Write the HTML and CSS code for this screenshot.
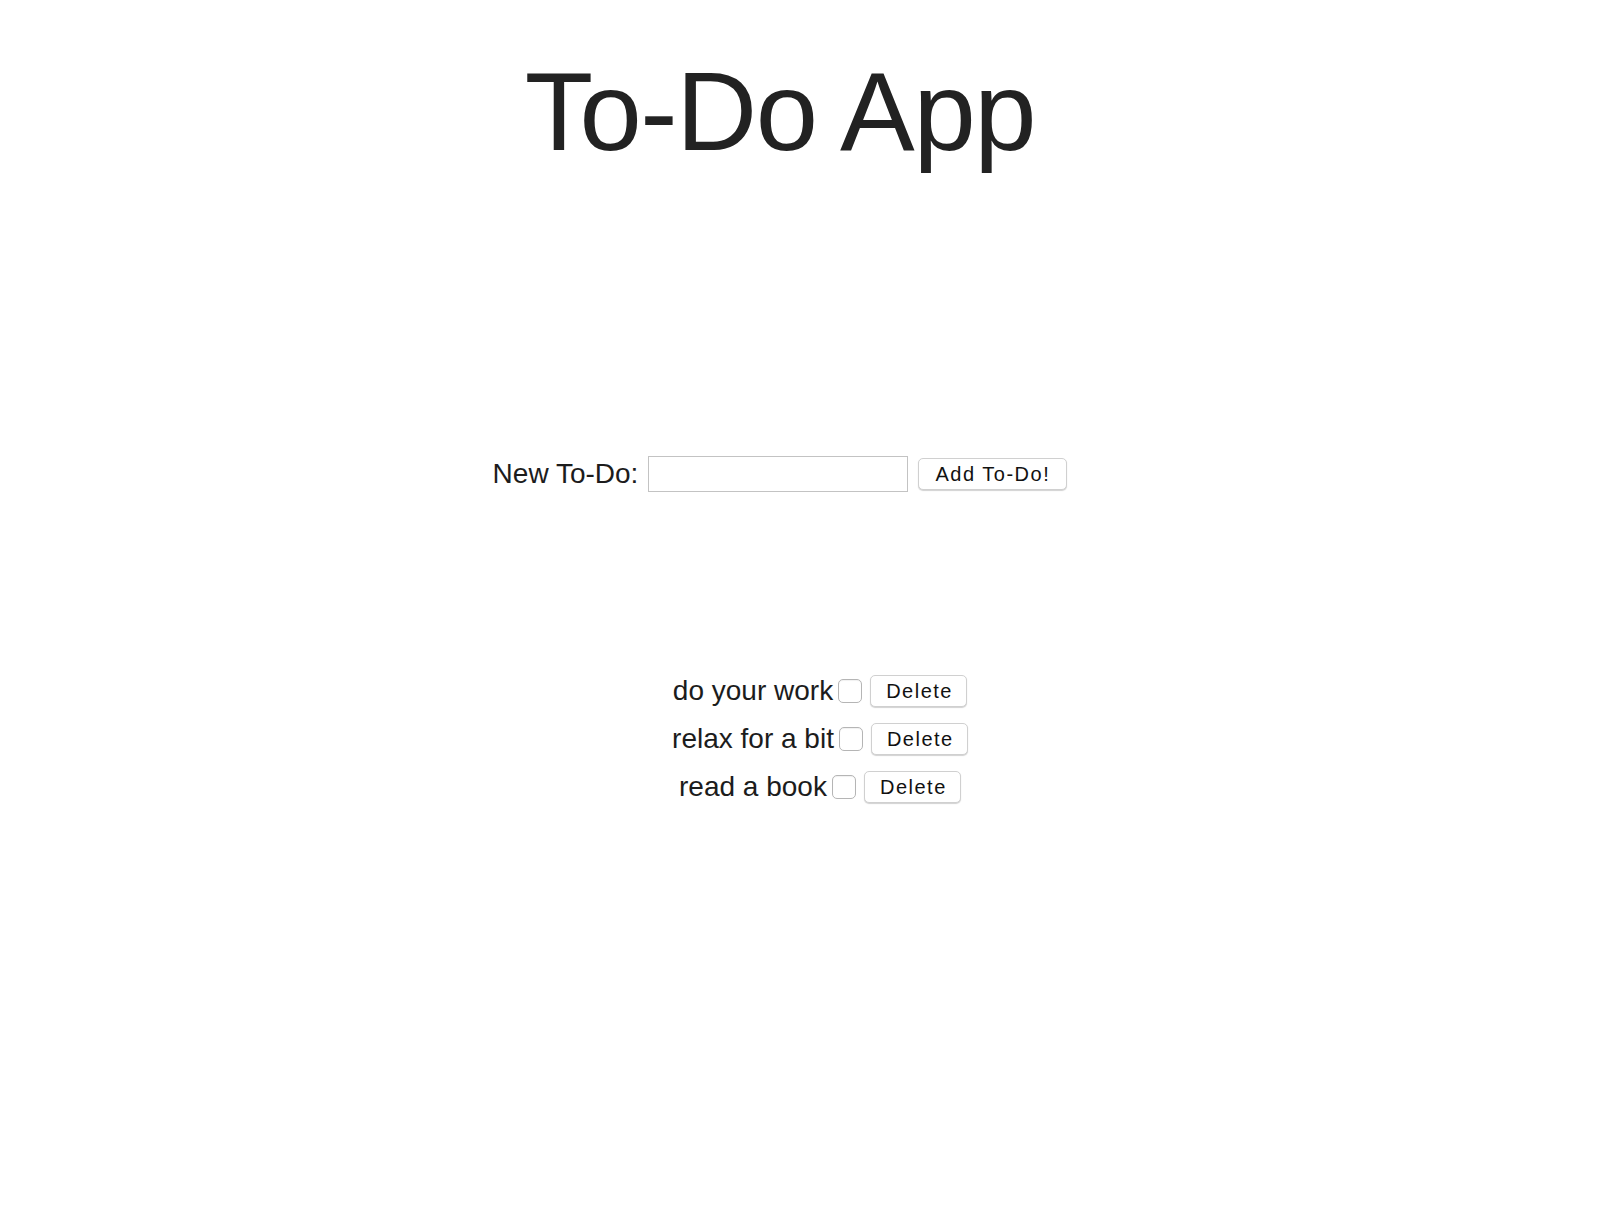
FILE: index.html
```html
<!DOCTYPE html>
<html>
<head>
<meta charset="utf-8">
<title>To-Do App</title>
<link rel="stylesheet" href="styles.css">
</head>
<body>
<div class="app">
  <header class="top">
    <h1 class="title">To-Do App</h1>
    <form class="new-form" onsubmit="return false;">
      <label class="new-label" for="newtodo">New To-Do:</label>
      <input class="new-input" id="newtodo" type="text">
      <button class="btn btn-add" type="submit">Add To-Do!</button>
    </form>
  </header>
  <ul class="todos">
    <li class="todo"><span class="todo-text">do your work</span><input class="check" type="checkbox"><button class="btn btn-del">Delete</button></li>
    <li class="todo"><span class="todo-text">relax for a bit</span><input class="check" type="checkbox"><button class="btn btn-del">Delete</button></li>
    <li class="todo"><span class="todo-text">read a book</span><input class="check" type="checkbox"><button class="btn btn-del">Delete</button></li>
  </ul>
</div>
</body>
</html>
```

FILE: styles.css
```css
html, body {
  margin: 0;
  padding: 0;
  background: #ffffff;
}

body {
  font-family: "Liberation Sans", Arial, Helvetica, sans-serif;
  color: #222222;
}

.app {
  padding: 0 8px;
}

.top {
  padding-right: 40px;
  text-align: center;
}

.title {
  margin: 0;
  padding-top: 47px;
  font-size: 112px;
  font-weight: 400;
  letter-spacing: -1.4px;
  line-height: normal;
  color: #222222;
}

.new-form {
  margin-top: 280px;
  display: flex;
  justify-content: center;
  align-items: center;
  height: 36px;
}

.new-label {
  font-size: 28px;
  color: #1c1c1c;
}

.new-input {
  box-sizing: border-box;
  width: 260px;
  height: 36px;
  margin: 0 0 0 10px;
  padding: 2px 6px;
  border: 1px solid #c3c3c3;
  border-radius: 0;
  font-size: 20px;
  font-family: inherit;
  background: #fff;
}

.btn {
  box-sizing: border-box;
  height: 32px;
  padding: 0 15px;
  background: #ffffff;
  border: 1px solid #d0d0d0;
  border-radius: 5px;
  box-shadow: 0 1px 1px rgba(0, 0, 0, 0.18);
  font-family: "Liberation Sans", Arial, sans-serif;
  font-size: 20px;
  letter-spacing: 1.5px;
  color: #111111;
  line-height: 1;
  cursor: pointer;
}

.btn-add {
  margin-left: 10px;
  width: 149px;
}

.todos {
  list-style: none;
  margin: 175px 0 0 0;
  padding: 0 0 0 40px;
}

.todo {
  display: flex;
  justify-content: center;
  align-items: center;
  height: 48px;
}

.todo-text {
  font-size: 28px;
  color: #1c1c1c;
}

.check {
  appearance: none;
  -webkit-appearance: none;
  box-sizing: border-box;
  width: 24px;
  height: 24px;
  margin: 0 0 0 5px;
  border: 1px solid #b5b5b5;
  border-radius: 5px;
  background: #ffffff;
  box-shadow: inset 0 1px 1px rgba(0, 0, 0, 0.06);
}

.btn-del {
  margin-left: 8px;
  width: 97px;
}
```
